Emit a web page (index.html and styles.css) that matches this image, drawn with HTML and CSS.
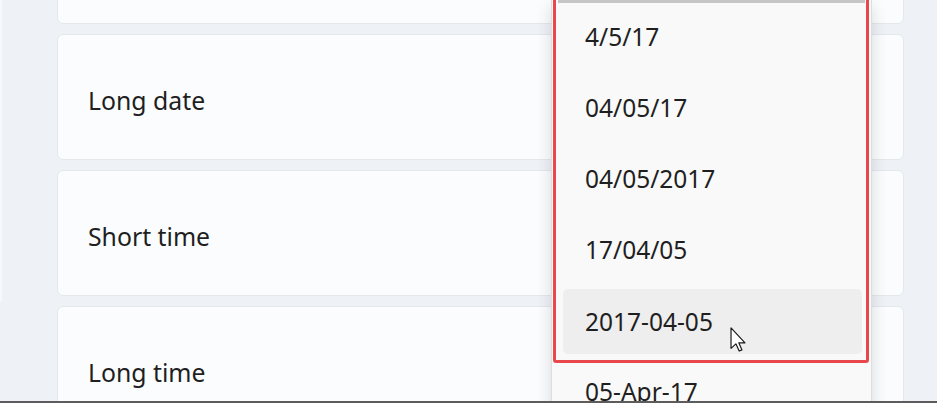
FILE: index.html
```html
<!DOCTYPE html>
<html lang="en">
<head>
<meta charset="utf-8">
<title>Date and time formats</title>
<link rel="stylesheet" href="styles.css">
</head>
<body>
<div class="page">
  <div class="cards">
    <div class="card"></div>
    <div class="card"><span class="label">Long date</span></div>
    <div class="card"><span class="label">Short time</span></div>
    <div class="card"><span class="label">Long time</span></div>
  </div>
</div>

<div class="dropdown">
  <div class="dropdown-top"></div>
  <div class="option">4/5/17</div>
  <div class="option">04/05/17</div>
  <div class="option">04/05/2017</div>
  <div class="option">17/04/05</div>
  <div class="option option-hover">2017-04-05</div>
  <div class="option">05-Apr-17</div>
</div>

<div class="highlight-box"></div>

<svg class="cursor" viewBox="0 0 12 19" width="16" height="25" aria-hidden="true">
  <path d="M0.7 0.7 L0.7 16.2 L4.4 12.8 L6.9 18.3 L9 17.4 L6.6 12 L11.3 12 Z" fill="#ffffff" stroke="#1a1a1a" stroke-width="0.9" stroke-linejoin="round"/>
</svg>

<div class="screen-edge"></div>
</body>
</html>
```

FILE: styles.css
```css
html, body {
  margin: 0;
  padding: 0;
}

body {
  width: 937px;
  height: 403px;
  overflow: hidden;
  background: #eef2f7;
  font-family: "Noto Sans", "Open Sans", "DejaVu Sans", sans-serif;
  color: #1f1f1f;
  position: relative;
}

.page {
  border-left: 2px solid #f6f8fb;
  padding: 0 33px 0 55px;
  height: 403px;
  box-sizing: border-box;
}

.cards {
  display: flex;
  flex-direction: column;
  gap: 10px;
  margin-top: -102px;
}

.card {
  height: 126px;
  box-sizing: border-box;
  background: #fbfcfd;
  border: 1px solid #e4e8ec;
  border-radius: 6px;
  display: flex;
  align-items: center;
  padding: 5px 0 0 30px;
  flex-shrink: 0;
}

.label {
  font-size: 24.8px;
  line-height: 32px;
}

.dropdown {
  position: absolute;
  left: 551px;
  top: 0;
  width: 321px;
  height: 430px;
  box-sizing: border-box;
  background: #f9f9f9;
  border: 1px solid #dedede;
  border-top: none;
  border-radius: 0 0 6px 6px;
  box-shadow: 0 6px 16px rgba(0, 0, 0, 0.14);
}

.dropdown-top {
  height: 3px;
  margin: 0 6px;
  background: #c6c6c6;
}

.option {
  height: 71px;
  box-sizing: border-box;
  display: flex;
  align-items: center;
  padding-left: 33px;
  padding-bottom: 4px;
  font-size: 24.5px;
  color: #1f1f1f;
}

.option-hover {
  margin: 2px 9px 4px 11px;
  padding-left: 22px;
  padding-bottom: 0;
  background: #eeeeee;
  border-radius: 5px;
  height: 65px;
}

.highlight-box {
  position: absolute;
  left: 553px;
  top: -8px;
  width: 316px;
  height: 371px;
  box-sizing: border-box;
  border: 3px solid #e8484b;
  border-radius: 3px;
  pointer-events: none;
}

.cursor {
  position: absolute;
  left: 730px;
  top: 327px;
}

.screen-edge {
  position: absolute;
  left: 0;
  right: 0;
  bottom: 0;
  height: 2px;
  background: #5c5c5c;
}
```
